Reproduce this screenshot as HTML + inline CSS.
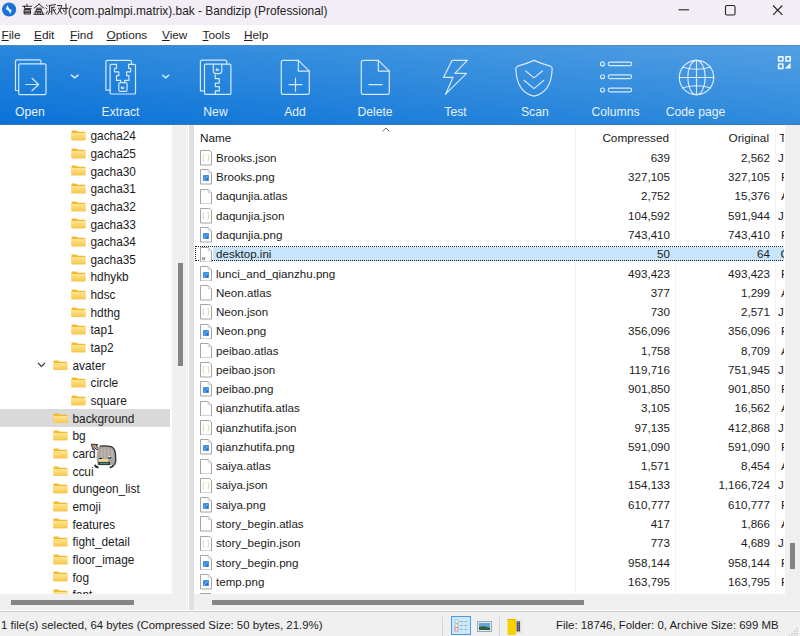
<!DOCTYPE html><html><head><meta charset="utf-8"><style>
*{margin:0;padding:0;box-sizing:border-box}
html,body{width:800px;height:636px;overflow:hidden;background:#fff}
body{position:relative;font-family:"Liberation Sans", sans-serif;color:#1b1b1b}
.abs{position:absolute}
svg{display:block}
#title{left:0;top:0;width:800px;height:25px;background:#f3eef5}
#title .t{position:absolute;left:22px;top:3.7px;font-size:11.88px;white-space:nowrap;color:#222}
#menu{left:0;top:25px;width:800px;height:20px;background:#fff}
#menu span{position:absolute;top:2.6px;font-size:11.8px;white-space:nowrap;color:#1e1e1e}
#menu u{text-decoration:underline;text-underline-offset:0.5px;text-decoration-thickness:1px}
#tb{left:0;top:45px;width:800px;height:80px;background:linear-gradient(90deg,#0a72d8,#2e8add)}
#tbt{left:0;top:0;width:800px;height:80px;background:linear-gradient(90deg,#2a88dc,#549fe2);-webkit-mask-image:linear-gradient(180deg,#000 0%,rgba(0,0,0,0) 100%);mask-image:linear-gradient(180deg,#000 0%,rgba(0,0,0,0) 100%)}
.lbl{position:absolute;top:59.8px;font-size:12.2px;color:#e6f1fc;white-space:nowrap;transform:translateX(-50%)}
#tree{left:0;top:125px;width:172px;height:469px;background:#fff;overflow:hidden}
.tr{position:absolute;left:0;width:172px;height:17.65px}
.tr .tx{position:absolute;top:2.7px;font-size:11.85px;white-space:nowrap}
.fold{position:absolute;top:3.6px;width:14.9px;height:10.8px}
#list{left:194px;top:125px;width:590px;height:469px;background:#fff;overflow:hidden}
.lr{position:absolute;left:0;width:591px;height:19.23px}
.lr .nm{position:absolute;left:22px;top:1.7px;font-size:11.6px;white-space:nowrap}
.lr .c1{position:absolute;right:115px;top:1.7px;font-size:11.6px;white-space:nowrap}
.lr .c2{position:absolute;right:15px;top:1.7px;font-size:11.6px;white-space:nowrap}
.lr .c3{position:absolute;left:587px;top:1.7px;font-size:11.6px;white-space:nowrap}
#status{left:0;top:611px;width:800px;height:25px;background:#f0f0f0;border-top:1px solid #cdcdcd}
#status span{position:absolute;top:7.3px;font-size:11.42px;white-space:nowrap}
</style></head><body>
<div id="title" class="abs">
<svg class="abs" style="left:0;top:0" width="20" height="20" viewBox="0 0 20 20"><circle cx="9.1" cy="9.5" r="7.1" fill="#1b72d6"/><path d="M7.2 5 L9.3 8.7 L11.7 9.9 L10.5 14.1 L8.3 10.5 L5.9 9.2 Z" fill="#e6f5ff"/></svg>
<svg class="abs" style="left:0;top:0" width="70" height="25" viewBox="0 0 70 25" fill="none" stroke="#262626" stroke-width="1" stroke-linecap="square"><path d="M27 4.3V5.6 M22.8 6.3H31.6 M24.6 6.3V8.6H31 M24.6 9.6H30.4V14 H24.6Z M24.6 11.1H30.4 M24.6 12.6H30.4"/><path d="M39 4.2L34.2 8 M39 4.2L43.8 8 M36.8 8.2H41.2 M36.6 9.4H41.4V11.2H36.6Z M35.2 12H42.8V14 M35.2 12V14 M37.8 12V14 M40.2 12V14 M34 14.3H44"/><path d="M46.4 5L47.2 5.8 M46 8L46.8 8.8 M46.2 13.8L47.4 11.2 M49.2 5.6L55.4 4.6 M49.6 6V10Q49.4 12.6 48.2 14.3 M51.6 7.6L54.6 7 M51.8 7.8V14.2 M51.8 10.6L50.4 12 M53 9L56 14.2 M55.4 9.4L54 10.8"/><path d="M57.6 5.6H61.8Q60.6 10 57.6 14 M58.6 8.2L62 13.8 M61.6 8.4H67.6 M66 4.3V13.6Q66 14.4 65 14.2 M63.4 10L64.2 11.6"/></svg>
<div class="t" style="left:68px">(com.palmpi.matrix).bak - Bandizip (Professional)</div>
<svg class="abs" style="left:660px;top:0" width="140" height="25" viewBox="0 0 140 25"><line x1="18.5" y1="9.8" x2="29" y2="9.8" stroke="#222" stroke-width="1.1"/><rect x="65.5" y="5.5" width="9.5" height="9.5" rx="1.5" fill="none" stroke="#222" stroke-width="1.1"/><path d="M113 5.5 L122.3 14.8 M122.3 5.5 L113 14.8" stroke="#222" stroke-width="1.1"/></svg>
</div>
<div id="menu" class="abs">
<span style="left:1.5px"><u>F</u>ile</span>
<span style="left:34px"><u>E</u>dit</span>
<span style="left:70px"><u>F</u>ind</span>
<span style="left:106.5px"><u>O</u>ptions</span>
<span style="left:162px"><u>V</u>iew</span>
<span style="left:202.5px"><u>T</u>ools</span>
<span style="left:244px"><u>H</u>elp</span>
</div>
<div id="tb" class="abs">
<div id="tbt" class="abs"></div>
<div class="abs" style="left:0;top:0;width:800px;height:1px;background:#4d8bc8"></div>
<div class="abs" style="left:0;top:79px;width:800px;height:1px;background:#3a78b8"></div>
<svg class="abs" style="left:0;top:0" width="800" height="80" viewBox="0 45 800 80" fill="none" stroke="rgba(232,243,255,0.9)" stroke-width="1.2" stroke-linejoin="round" stroke-linecap="round">
<!-- open -->
<path d="M18.7 90.5 L15.5 90.5 L15.5 61.5 Q15.5 59.8 17.2 59.8 L39.5 59.8 Q41 59.8 41 61.5 L41 63.9"/>
<rect x="18.7" y="63.9" width="27.3" height="30.8" rx="1.2"/>
<path d="M25.6 84.5 L38.6 84.5 M32 78.3 L38.6 84.5 L32 90.8"/>
<path d="M71.4 75.1 L74.8 77.9 L78.1 75.2" stroke-width="1.5" stroke="#d2ecff"/>
<!-- extract -->
<path d="M110.1 90.2 L105.9 90.2 L105.9 62 Q105.9 60.4 107.5 60.4 L130 60.4 Q131.5 60.4 131.5 62 L131.5 64.3"/>
<path d="M116.5 64.3 H111.1 Q110.1 64.3 110.1 65.3 V93 Q110.1 94 111.1 94 H134.5 Q135.5 94 135.5 93 V65.3 Q135.5 64.3 134.5 64.3 H128.6"/>
<path d="M116.5 64.3 V68.3 H114.5 V71.8 H118.8 V75.6 H116.5 V80.4 H120.8 V82.6"/>
<path d="M128.6 64.3 V68.3 H130.6 V71.8 H126.6 V75.6 H128.9 V80.4 H124.6 V82.6"/>
<rect x="118.8" y="82.6" width="8.3" height="8.8" rx="1.6"/>
<rect x="121" y="87.2" width="3.2" height="1.4" rx="0.7" stroke-width="1"/>
<path d="M162.7 75.3 L165.7 77.9 L168.7 75.3" stroke-width="1.5" stroke="#d2ecff"/>
<!-- new -->
<path d="M204.5 90.9 L200.4 90.9 L200.4 61.8 Q200.4 60.1 202.1 60.1 L225.1 60.1 Q226.8 60.1 226.8 61.8 L226.8 64.2"/>
<rect x="204.5" y="64.2" width="26.4" height="30.2" rx="1"/>
<path d="M213.3 64.2 V70.8 Q213.3 73.6 216.1 73.6 H219 Q221.8 73.6 221.8 70.8 V64.2"/>
<rect x="215.8" y="69.1" width="3" height="1.5" rx="0.75" stroke-width="1"/>
<path d="M215.3 74.9 V78.7 H219.3 V83.2 H215.3 V86.6 H219.3 V90.9 H215.3 V94.4"/>
<!-- add -->
<path d="M281.3 62 Q281.3 60.4 283 60.4 L298.3 60.4 L309.3 71.1 L309.3 92.7 Q309.3 94.4 307.6 94.4 L283 94.4 Q281.3 94.4 281.3 92.7 Z"/>
<path d="M298.3 60.4 V71.1 H309.3"/>
<path d="M288.9 84.6 H302.1 M295.5 78 V91.2"/>
<!-- delete -->
<path d="M361.3 62 Q361.3 60.4 363 60.4 L378.3 60.4 L389.3 71.1 L389.3 92.7 Q389.3 94.4 387.6 94.4 L363 94.4 Q361.3 94.4 361.3 92.7 Z"/>
<path d="M378.3 60.4 V71.1 H389.3"/>
<path d="M368.9 84.6 H382.1"/>
<!-- test -->
<path d="M452 60.4 L467.4 60.4 L454.9 73.3 L466.5 73.3 L445.4 94.4 L453 77.4 L443.5 77.4 Z"/>
<!-- scan -->
<path d="M534 60.4 Q527 63.6 517.6 66.2 Q515.7 66.8 515.8 68.8 Q516.4 82 521.4 88.4 Q526.4 94.6 534 96.2 Q541.6 94.6 546.6 88.4 Q551.6 82 552.2 68.8 Q552.3 66.8 550.4 66.2 Q541 63.6 534 60.4 Z"/>
<path d="M525.8 71 L534 77.9 L542.4 71 M524 80.3 L534 88.6 L543.8 80.3"/>
<!-- columns -->
<circle cx="602.5" cy="63.9" r="2"/><circle cx="602.5" cy="76.75" r="2"/><circle cx="602.5" cy="90" r="2"/>
<rect x="608.2" y="62.1" width="23.5" height="3.6" rx="1.8"/>
<rect x="608.2" y="74.95" width="23.5" height="3.6" rx="1.8"/>
<rect x="608.2" y="88.2" width="23.5" height="3.6" rx="1.8"/>
<!-- code page -->
<circle cx="696.5" cy="77.5" r="17.2"/>
<ellipse cx="696.5" cy="77.5" rx="8.7" ry="17.2"/>
<path d="M696.5 60.3 V94.7 M679.3 77.5 H713.7"/>
<path d="M682.3 67 Q696.5 71.5 710.7 67 M682.3 88 Q696.5 83.5 710.7 88"/>
<!-- small grid icon -->
<g stroke-width="1.5" stroke="#f4faff">
<rect x="778.6" y="56.8" width="4.3" height="4.3"/>
<rect x="785.9" y="56.8" width="4.3" height="4.3"/>
<rect x="778.6" y="64.1" width="4.3" height="4.3"/>
</g>
<path d="M784.8 68.6 L790.6 62.8 L790.6 68.6 Z" fill="#f4faff" stroke="none"/>
</svg>
<div class="lbl" style="left:30px">Open</div>
<div class="lbl" style="left:120.5px">Extract</div>
<div class="lbl" style="left:215.5px">New</div>
<div class="lbl" style="left:295px">Add</div>
<div class="lbl" style="left:375px">Delete</div>
<div class="lbl" style="left:455.5px">Test</div>
<div class="lbl" style="left:534.8px">Scan</div>
<div class="lbl" style="left:615.5px">Columns</div>
<div class="lbl" style="left:695.5px">Code page</div>
</div>
<div id="tree" class="abs">
<div class="tr" style="top:1.60px;">
<svg class="fold" style="left:71px" viewBox="0 0 14 12" preserveAspectRatio="none"><defs><linearGradient id="fg" x1="0" y1="0" x2="0" y2="1"><stop offset="0" stop-color="#ffe592"/><stop offset="1" stop-color="#f8c648"/></linearGradient></defs><path d="M0.5 1.2 Q0.5 0.5 1.2 0.5 L5 0.5 L6.4 2 L12.8 2 Q13.5 2 13.5 2.7 L13.5 11 Q13.5 11.5 13 11.5 L1 11.5 Q0.5 11.5 0.5 11 Z" fill="#f3b92e"/><path d="M0.5 3.4 L13.5 3.4 L13.5 11 Q13.5 11.5 13 11.5 L1 11.5 Q0.5 11.5 0.5 11 Z" fill="url(#fg)"/></svg>
<div class="tx" style="left:90.5px">gacha24</div>
</div>
<div class="tr" style="top:19.25px;">
<svg class="fold" style="left:71px" viewBox="0 0 14 12" preserveAspectRatio="none"><defs><linearGradient id="fg" x1="0" y1="0" x2="0" y2="1"><stop offset="0" stop-color="#ffe592"/><stop offset="1" stop-color="#f8c648"/></linearGradient></defs><path d="M0.5 1.2 Q0.5 0.5 1.2 0.5 L5 0.5 L6.4 2 L12.8 2 Q13.5 2 13.5 2.7 L13.5 11 Q13.5 11.5 13 11.5 L1 11.5 Q0.5 11.5 0.5 11 Z" fill="#f3b92e"/><path d="M0.5 3.4 L13.5 3.4 L13.5 11 Q13.5 11.5 13 11.5 L1 11.5 Q0.5 11.5 0.5 11 Z" fill="url(#fg)"/></svg>
<div class="tx" style="left:90.5px">gacha25</div>
</div>
<div class="tr" style="top:36.90px;">
<svg class="fold" style="left:71px" viewBox="0 0 14 12" preserveAspectRatio="none"><defs><linearGradient id="fg" x1="0" y1="0" x2="0" y2="1"><stop offset="0" stop-color="#ffe592"/><stop offset="1" stop-color="#f8c648"/></linearGradient></defs><path d="M0.5 1.2 Q0.5 0.5 1.2 0.5 L5 0.5 L6.4 2 L12.8 2 Q13.5 2 13.5 2.7 L13.5 11 Q13.5 11.5 13 11.5 L1 11.5 Q0.5 11.5 0.5 11 Z" fill="#f3b92e"/><path d="M0.5 3.4 L13.5 3.4 L13.5 11 Q13.5 11.5 13 11.5 L1 11.5 Q0.5 11.5 0.5 11 Z" fill="url(#fg)"/></svg>
<div class="tx" style="left:90.5px">gacha30</div>
</div>
<div class="tr" style="top:54.55px;">
<svg class="fold" style="left:71px" viewBox="0 0 14 12" preserveAspectRatio="none"><defs><linearGradient id="fg" x1="0" y1="0" x2="0" y2="1"><stop offset="0" stop-color="#ffe592"/><stop offset="1" stop-color="#f8c648"/></linearGradient></defs><path d="M0.5 1.2 Q0.5 0.5 1.2 0.5 L5 0.5 L6.4 2 L12.8 2 Q13.5 2 13.5 2.7 L13.5 11 Q13.5 11.5 13 11.5 L1 11.5 Q0.5 11.5 0.5 11 Z" fill="#f3b92e"/><path d="M0.5 3.4 L13.5 3.4 L13.5 11 Q13.5 11.5 13 11.5 L1 11.5 Q0.5 11.5 0.5 11 Z" fill="url(#fg)"/></svg>
<div class="tx" style="left:90.5px">gacha31</div>
</div>
<div class="tr" style="top:72.20px;">
<svg class="fold" style="left:71px" viewBox="0 0 14 12" preserveAspectRatio="none"><defs><linearGradient id="fg" x1="0" y1="0" x2="0" y2="1"><stop offset="0" stop-color="#ffe592"/><stop offset="1" stop-color="#f8c648"/></linearGradient></defs><path d="M0.5 1.2 Q0.5 0.5 1.2 0.5 L5 0.5 L6.4 2 L12.8 2 Q13.5 2 13.5 2.7 L13.5 11 Q13.5 11.5 13 11.5 L1 11.5 Q0.5 11.5 0.5 11 Z" fill="#f3b92e"/><path d="M0.5 3.4 L13.5 3.4 L13.5 11 Q13.5 11.5 13 11.5 L1 11.5 Q0.5 11.5 0.5 11 Z" fill="url(#fg)"/></svg>
<div class="tx" style="left:90.5px">gacha32</div>
</div>
<div class="tr" style="top:89.85px;">
<svg class="fold" style="left:71px" viewBox="0 0 14 12" preserveAspectRatio="none"><defs><linearGradient id="fg" x1="0" y1="0" x2="0" y2="1"><stop offset="0" stop-color="#ffe592"/><stop offset="1" stop-color="#f8c648"/></linearGradient></defs><path d="M0.5 1.2 Q0.5 0.5 1.2 0.5 L5 0.5 L6.4 2 L12.8 2 Q13.5 2 13.5 2.7 L13.5 11 Q13.5 11.5 13 11.5 L1 11.5 Q0.5 11.5 0.5 11 Z" fill="#f3b92e"/><path d="M0.5 3.4 L13.5 3.4 L13.5 11 Q13.5 11.5 13 11.5 L1 11.5 Q0.5 11.5 0.5 11 Z" fill="url(#fg)"/></svg>
<div class="tx" style="left:90.5px">gacha33</div>
</div>
<div class="tr" style="top:107.50px;">
<svg class="fold" style="left:71px" viewBox="0 0 14 12" preserveAspectRatio="none"><defs><linearGradient id="fg" x1="0" y1="0" x2="0" y2="1"><stop offset="0" stop-color="#ffe592"/><stop offset="1" stop-color="#f8c648"/></linearGradient></defs><path d="M0.5 1.2 Q0.5 0.5 1.2 0.5 L5 0.5 L6.4 2 L12.8 2 Q13.5 2 13.5 2.7 L13.5 11 Q13.5 11.5 13 11.5 L1 11.5 Q0.5 11.5 0.5 11 Z" fill="#f3b92e"/><path d="M0.5 3.4 L13.5 3.4 L13.5 11 Q13.5 11.5 13 11.5 L1 11.5 Q0.5 11.5 0.5 11 Z" fill="url(#fg)"/></svg>
<div class="tx" style="left:90.5px">gacha34</div>
</div>
<div class="tr" style="top:125.15px;">
<svg class="fold" style="left:71px" viewBox="0 0 14 12" preserveAspectRatio="none"><defs><linearGradient id="fg" x1="0" y1="0" x2="0" y2="1"><stop offset="0" stop-color="#ffe592"/><stop offset="1" stop-color="#f8c648"/></linearGradient></defs><path d="M0.5 1.2 Q0.5 0.5 1.2 0.5 L5 0.5 L6.4 2 L12.8 2 Q13.5 2 13.5 2.7 L13.5 11 Q13.5 11.5 13 11.5 L1 11.5 Q0.5 11.5 0.5 11 Z" fill="#f3b92e"/><path d="M0.5 3.4 L13.5 3.4 L13.5 11 Q13.5 11.5 13 11.5 L1 11.5 Q0.5 11.5 0.5 11 Z" fill="url(#fg)"/></svg>
<div class="tx" style="left:90.5px">gacha35</div>
</div>
<div class="tr" style="top:142.80px;">
<svg class="fold" style="left:71px" viewBox="0 0 14 12" preserveAspectRatio="none"><defs><linearGradient id="fg" x1="0" y1="0" x2="0" y2="1"><stop offset="0" stop-color="#ffe592"/><stop offset="1" stop-color="#f8c648"/></linearGradient></defs><path d="M0.5 1.2 Q0.5 0.5 1.2 0.5 L5 0.5 L6.4 2 L12.8 2 Q13.5 2 13.5 2.7 L13.5 11 Q13.5 11.5 13 11.5 L1 11.5 Q0.5 11.5 0.5 11 Z" fill="#f3b92e"/><path d="M0.5 3.4 L13.5 3.4 L13.5 11 Q13.5 11.5 13 11.5 L1 11.5 Q0.5 11.5 0.5 11 Z" fill="url(#fg)"/></svg>
<div class="tx" style="left:90.5px">hdhykb</div>
</div>
<div class="tr" style="top:160.45px;">
<svg class="fold" style="left:71px" viewBox="0 0 14 12" preserveAspectRatio="none"><defs><linearGradient id="fg" x1="0" y1="0" x2="0" y2="1"><stop offset="0" stop-color="#ffe592"/><stop offset="1" stop-color="#f8c648"/></linearGradient></defs><path d="M0.5 1.2 Q0.5 0.5 1.2 0.5 L5 0.5 L6.4 2 L12.8 2 Q13.5 2 13.5 2.7 L13.5 11 Q13.5 11.5 13 11.5 L1 11.5 Q0.5 11.5 0.5 11 Z" fill="#f3b92e"/><path d="M0.5 3.4 L13.5 3.4 L13.5 11 Q13.5 11.5 13 11.5 L1 11.5 Q0.5 11.5 0.5 11 Z" fill="url(#fg)"/></svg>
<div class="tx" style="left:90.5px">hdsc</div>
</div>
<div class="tr" style="top:178.10px;">
<svg class="fold" style="left:71px" viewBox="0 0 14 12" preserveAspectRatio="none"><defs><linearGradient id="fg" x1="0" y1="0" x2="0" y2="1"><stop offset="0" stop-color="#ffe592"/><stop offset="1" stop-color="#f8c648"/></linearGradient></defs><path d="M0.5 1.2 Q0.5 0.5 1.2 0.5 L5 0.5 L6.4 2 L12.8 2 Q13.5 2 13.5 2.7 L13.5 11 Q13.5 11.5 13 11.5 L1 11.5 Q0.5 11.5 0.5 11 Z" fill="#f3b92e"/><path d="M0.5 3.4 L13.5 3.4 L13.5 11 Q13.5 11.5 13 11.5 L1 11.5 Q0.5 11.5 0.5 11 Z" fill="url(#fg)"/></svg>
<div class="tx" style="left:90.5px">hdthg</div>
</div>
<div class="tr" style="top:195.75px;">
<svg class="fold" style="left:71px" viewBox="0 0 14 12" preserveAspectRatio="none"><defs><linearGradient id="fg" x1="0" y1="0" x2="0" y2="1"><stop offset="0" stop-color="#ffe592"/><stop offset="1" stop-color="#f8c648"/></linearGradient></defs><path d="M0.5 1.2 Q0.5 0.5 1.2 0.5 L5 0.5 L6.4 2 L12.8 2 Q13.5 2 13.5 2.7 L13.5 11 Q13.5 11.5 13 11.5 L1 11.5 Q0.5 11.5 0.5 11 Z" fill="#f3b92e"/><path d="M0.5 3.4 L13.5 3.4 L13.5 11 Q13.5 11.5 13 11.5 L1 11.5 Q0.5 11.5 0.5 11 Z" fill="url(#fg)"/></svg>
<div class="tx" style="left:90.5px">tap1</div>
</div>
<div class="tr" style="top:213.40px;">
<svg class="fold" style="left:71px" viewBox="0 0 14 12" preserveAspectRatio="none"><defs><linearGradient id="fg" x1="0" y1="0" x2="0" y2="1"><stop offset="0" stop-color="#ffe592"/><stop offset="1" stop-color="#f8c648"/></linearGradient></defs><path d="M0.5 1.2 Q0.5 0.5 1.2 0.5 L5 0.5 L6.4 2 L12.8 2 Q13.5 2 13.5 2.7 L13.5 11 Q13.5 11.5 13 11.5 L1 11.5 Q0.5 11.5 0.5 11 Z" fill="#f3b92e"/><path d="M0.5 3.4 L13.5 3.4 L13.5 11 Q13.5 11.5 13 11.5 L1 11.5 Q0.5 11.5 0.5 11 Z" fill="url(#fg)"/></svg>
<div class="tx" style="left:90.5px">tap2</div>
</div>
<div class="tr" style="top:231.05px;">
<svg class="fold" style="left:53px" viewBox="0 0 14 12" preserveAspectRatio="none"><defs><linearGradient id="fg" x1="0" y1="0" x2="0" y2="1"><stop offset="0" stop-color="#ffe592"/><stop offset="1" stop-color="#f8c648"/></linearGradient></defs><path d="M0.5 1.2 Q0.5 0.5 1.2 0.5 L5 0.5 L6.4 2 L12.8 2 Q13.5 2 13.5 2.7 L13.5 11 Q13.5 11.5 13 11.5 L1 11.5 Q0.5 11.5 0.5 11 Z" fill="#f3b92e"/><path d="M0.5 3.4 L13.5 3.4 L13.5 11 Q13.5 11.5 13 11.5 L1 11.5 Q0.5 11.5 0.5 11 Z" fill="url(#fg)"/></svg>
<svg class="abs" style="left:37px;top:6px" width="10" height="6" viewBox="0 0 10 6"><path d="M1 1 L4.5 4.5 L8 1" fill="none" stroke="#333" stroke-width="1.1"/></svg>
<div class="tx" style="left:72.5px">avater</div>
</div>
<div class="tr" style="top:248.70px;">
<svg class="fold" style="left:71px" viewBox="0 0 14 12" preserveAspectRatio="none"><defs><linearGradient id="fg" x1="0" y1="0" x2="0" y2="1"><stop offset="0" stop-color="#ffe592"/><stop offset="1" stop-color="#f8c648"/></linearGradient></defs><path d="M0.5 1.2 Q0.5 0.5 1.2 0.5 L5 0.5 L6.4 2 L12.8 2 Q13.5 2 13.5 2.7 L13.5 11 Q13.5 11.5 13 11.5 L1 11.5 Q0.5 11.5 0.5 11 Z" fill="#f3b92e"/><path d="M0.5 3.4 L13.5 3.4 L13.5 11 Q13.5 11.5 13 11.5 L1 11.5 Q0.5 11.5 0.5 11 Z" fill="url(#fg)"/></svg>
<div class="tx" style="left:90.5px">circle</div>
</div>
<div class="tr" style="top:266.35px;">
<svg class="fold" style="left:71px" viewBox="0 0 14 12" preserveAspectRatio="none"><defs><linearGradient id="fg" x1="0" y1="0" x2="0" y2="1"><stop offset="0" stop-color="#ffe592"/><stop offset="1" stop-color="#f8c648"/></linearGradient></defs><path d="M0.5 1.2 Q0.5 0.5 1.2 0.5 L5 0.5 L6.4 2 L12.8 2 Q13.5 2 13.5 2.7 L13.5 11 Q13.5 11.5 13 11.5 L1 11.5 Q0.5 11.5 0.5 11 Z" fill="#f3b92e"/><path d="M0.5 3.4 L13.5 3.4 L13.5 11 Q13.5 11.5 13 11.5 L1 11.5 Q0.5 11.5 0.5 11 Z" fill="url(#fg)"/></svg>
<div class="tx" style="left:90.5px">square</div>
</div>
<div class="tr" style="top:284.00px;background:linear-gradient(90deg,#d9d9d9 170.5px,#fff 170.5px);">
<svg class="fold" style="left:53px" viewBox="0 0 14 12" preserveAspectRatio="none"><defs><linearGradient id="fg" x1="0" y1="0" x2="0" y2="1"><stop offset="0" stop-color="#ffe592"/><stop offset="1" stop-color="#f8c648"/></linearGradient></defs><path d="M0.5 1.2 Q0.5 0.5 1.2 0.5 L5 0.5 L6.4 2 L12.8 2 Q13.5 2 13.5 2.7 L13.5 11 Q13.5 11.5 13 11.5 L1 11.5 Q0.5 11.5 0.5 11 Z" fill="#f3b92e"/><path d="M0.5 3.4 L13.5 3.4 L13.5 11 Q13.5 11.5 13 11.5 L1 11.5 Q0.5 11.5 0.5 11 Z" fill="url(#fg)"/></svg>
<div class="tx" style="left:72.5px">background</div>
</div>
<div class="tr" style="top:301.65px;">
<svg class="fold" style="left:53px" viewBox="0 0 14 12" preserveAspectRatio="none"><defs><linearGradient id="fg" x1="0" y1="0" x2="0" y2="1"><stop offset="0" stop-color="#ffe592"/><stop offset="1" stop-color="#f8c648"/></linearGradient></defs><path d="M0.5 1.2 Q0.5 0.5 1.2 0.5 L5 0.5 L6.4 2 L12.8 2 Q13.5 2 13.5 2.7 L13.5 11 Q13.5 11.5 13 11.5 L1 11.5 Q0.5 11.5 0.5 11 Z" fill="#f3b92e"/><path d="M0.5 3.4 L13.5 3.4 L13.5 11 Q13.5 11.5 13 11.5 L1 11.5 Q0.5 11.5 0.5 11 Z" fill="url(#fg)"/></svg>
<div class="tx" style="left:72.5px">bg</div>
</div>
<div class="tr" style="top:319.30px;">
<svg class="fold" style="left:53px" viewBox="0 0 14 12" preserveAspectRatio="none"><defs><linearGradient id="fg" x1="0" y1="0" x2="0" y2="1"><stop offset="0" stop-color="#ffe592"/><stop offset="1" stop-color="#f8c648"/></linearGradient></defs><path d="M0.5 1.2 Q0.5 0.5 1.2 0.5 L5 0.5 L6.4 2 L12.8 2 Q13.5 2 13.5 2.7 L13.5 11 Q13.5 11.5 13 11.5 L1 11.5 Q0.5 11.5 0.5 11 Z" fill="#f3b92e"/><path d="M0.5 3.4 L13.5 3.4 L13.5 11 Q13.5 11.5 13 11.5 L1 11.5 Q0.5 11.5 0.5 11 Z" fill="url(#fg)"/></svg>
<div class="tx" style="left:72.5px">card</div>
</div>
<div class="tr" style="top:336.95px;">
<svg class="fold" style="left:53px" viewBox="0 0 14 12" preserveAspectRatio="none"><defs><linearGradient id="fg" x1="0" y1="0" x2="0" y2="1"><stop offset="0" stop-color="#ffe592"/><stop offset="1" stop-color="#f8c648"/></linearGradient></defs><path d="M0.5 1.2 Q0.5 0.5 1.2 0.5 L5 0.5 L6.4 2 L12.8 2 Q13.5 2 13.5 2.7 L13.5 11 Q13.5 11.5 13 11.5 L1 11.5 Q0.5 11.5 0.5 11 Z" fill="#f3b92e"/><path d="M0.5 3.4 L13.5 3.4 L13.5 11 Q13.5 11.5 13 11.5 L1 11.5 Q0.5 11.5 0.5 11 Z" fill="url(#fg)"/></svg>
<div class="tx" style="left:72.5px">ccui</div>
</div>
<div class="tr" style="top:354.60px;">
<svg class="fold" style="left:53px" viewBox="0 0 14 12" preserveAspectRatio="none"><defs><linearGradient id="fg" x1="0" y1="0" x2="0" y2="1"><stop offset="0" stop-color="#ffe592"/><stop offset="1" stop-color="#f8c648"/></linearGradient></defs><path d="M0.5 1.2 Q0.5 0.5 1.2 0.5 L5 0.5 L6.4 2 L12.8 2 Q13.5 2 13.5 2.7 L13.5 11 Q13.5 11.5 13 11.5 L1 11.5 Q0.5 11.5 0.5 11 Z" fill="#f3b92e"/><path d="M0.5 3.4 L13.5 3.4 L13.5 11 Q13.5 11.5 13 11.5 L1 11.5 Q0.5 11.5 0.5 11 Z" fill="url(#fg)"/></svg>
<div class="tx" style="left:72.5px">dungeon_list</div>
</div>
<div class="tr" style="top:372.25px;">
<svg class="fold" style="left:53px" viewBox="0 0 14 12" preserveAspectRatio="none"><defs><linearGradient id="fg" x1="0" y1="0" x2="0" y2="1"><stop offset="0" stop-color="#ffe592"/><stop offset="1" stop-color="#f8c648"/></linearGradient></defs><path d="M0.5 1.2 Q0.5 0.5 1.2 0.5 L5 0.5 L6.4 2 L12.8 2 Q13.5 2 13.5 2.7 L13.5 11 Q13.5 11.5 13 11.5 L1 11.5 Q0.5 11.5 0.5 11 Z" fill="#f3b92e"/><path d="M0.5 3.4 L13.5 3.4 L13.5 11 Q13.5 11.5 13 11.5 L1 11.5 Q0.5 11.5 0.5 11 Z" fill="url(#fg)"/></svg>
<div class="tx" style="left:72.5px">emoji</div>
</div>
<div class="tr" style="top:389.90px;">
<svg class="fold" style="left:53px" viewBox="0 0 14 12" preserveAspectRatio="none"><defs><linearGradient id="fg" x1="0" y1="0" x2="0" y2="1"><stop offset="0" stop-color="#ffe592"/><stop offset="1" stop-color="#f8c648"/></linearGradient></defs><path d="M0.5 1.2 Q0.5 0.5 1.2 0.5 L5 0.5 L6.4 2 L12.8 2 Q13.5 2 13.5 2.7 L13.5 11 Q13.5 11.5 13 11.5 L1 11.5 Q0.5 11.5 0.5 11 Z" fill="#f3b92e"/><path d="M0.5 3.4 L13.5 3.4 L13.5 11 Q13.5 11.5 13 11.5 L1 11.5 Q0.5 11.5 0.5 11 Z" fill="url(#fg)"/></svg>
<div class="tx" style="left:72.5px">features</div>
</div>
<div class="tr" style="top:407.55px;">
<svg class="fold" style="left:53px" viewBox="0 0 14 12" preserveAspectRatio="none"><defs><linearGradient id="fg" x1="0" y1="0" x2="0" y2="1"><stop offset="0" stop-color="#ffe592"/><stop offset="1" stop-color="#f8c648"/></linearGradient></defs><path d="M0.5 1.2 Q0.5 0.5 1.2 0.5 L5 0.5 L6.4 2 L12.8 2 Q13.5 2 13.5 2.7 L13.5 11 Q13.5 11.5 13 11.5 L1 11.5 Q0.5 11.5 0.5 11 Z" fill="#f3b92e"/><path d="M0.5 3.4 L13.5 3.4 L13.5 11 Q13.5 11.5 13 11.5 L1 11.5 Q0.5 11.5 0.5 11 Z" fill="url(#fg)"/></svg>
<div class="tx" style="left:72.5px">fight_detail</div>
</div>
<div class="tr" style="top:425.20px;">
<svg class="fold" style="left:53px" viewBox="0 0 14 12" preserveAspectRatio="none"><defs><linearGradient id="fg" x1="0" y1="0" x2="0" y2="1"><stop offset="0" stop-color="#ffe592"/><stop offset="1" stop-color="#f8c648"/></linearGradient></defs><path d="M0.5 1.2 Q0.5 0.5 1.2 0.5 L5 0.5 L6.4 2 L12.8 2 Q13.5 2 13.5 2.7 L13.5 11 Q13.5 11.5 13 11.5 L1 11.5 Q0.5 11.5 0.5 11 Z" fill="#f3b92e"/><path d="M0.5 3.4 L13.5 3.4 L13.5 11 Q13.5 11.5 13 11.5 L1 11.5 Q0.5 11.5 0.5 11 Z" fill="url(#fg)"/></svg>
<div class="tx" style="left:72.5px">floor_image</div>
</div>
<div class="tr" style="top:442.85px;">
<svg class="fold" style="left:53px" viewBox="0 0 14 12" preserveAspectRatio="none"><defs><linearGradient id="fg" x1="0" y1="0" x2="0" y2="1"><stop offset="0" stop-color="#ffe592"/><stop offset="1" stop-color="#f8c648"/></linearGradient></defs><path d="M0.5 1.2 Q0.5 0.5 1.2 0.5 L5 0.5 L6.4 2 L12.8 2 Q13.5 2 13.5 2.7 L13.5 11 Q13.5 11.5 13 11.5 L1 11.5 Q0.5 11.5 0.5 11 Z" fill="#f3b92e"/><path d="M0.5 3.4 L13.5 3.4 L13.5 11 Q13.5 11.5 13 11.5 L1 11.5 Q0.5 11.5 0.5 11 Z" fill="url(#fg)"/></svg>
<div class="tx" style="left:72.5px">fog</div>
</div>
<div class="tr" style="top:460.50px;">
<svg class="fold" style="left:53px" viewBox="0 0 14 12" preserveAspectRatio="none"><defs><linearGradient id="fg" x1="0" y1="0" x2="0" y2="1"><stop offset="0" stop-color="#ffe592"/><stop offset="1" stop-color="#f8c648"/></linearGradient></defs><path d="M0.5 1.2 Q0.5 0.5 1.2 0.5 L5 0.5 L6.4 2 L12.8 2 Q13.5 2 13.5 2.7 L13.5 11 Q13.5 11.5 13 11.5 L1 11.5 Q0.5 11.5 0.5 11 Z" fill="#f3b92e"/><path d="M0.5 3.4 L13.5 3.4 L13.5 11 Q13.5 11.5 13 11.5 L1 11.5 Q0.5 11.5 0.5 11 Z" fill="url(#fg)"/></svg>
<div class="tx" style="left:72.5px">font</div>
</div>
</div>
<div class="abs" style="left:172px;top:125px;width:17px;height:486px;background:linear-gradient(90deg,#f0f0f0 16px,#fff 16px)"></div>
<div class="abs" style="left:178px;top:263px;width:5px;height:103px;background:#858585"></div>
<div class="abs" style="left:0;top:594px;width:172px;height:17px;background:#f0f0f0"></div>
<div class="abs" style="left:11px;top:600px;width:123px;height:5px;background:#858585"></div>
<div class="abs" style="left:189px;top:125px;width:5px;height:486px;background:#dfdfdf"></div>
<div id="list" class="abs">
<div class="abs" style="left:6px;font-size:11.75px;top:6.3px">Name</div>
<svg class="abs" style="left:187.7px;top:2.4px" width="8" height="5" viewBox="0 0 8 5"><path d="M0.6 4.4 L4 1 L7.4 4.4" fill="none" stroke="#6e6e6e" stroke-width="1"/></svg>
<div class="abs" style="right:115px;font-size:11.75px;top:6.3px">Compressed</div>
<div class="abs" style="right:15px;font-size:11.75px;top:6.3px">Original</div>
<div class="abs" style="left:585.2px;font-size:11.75px;top:6.3px">T</div>
<div class="abs" style="left:381px;top:3px;width:1px;height:470px;background:#f3f3f3"></div>
<div class="abs" style="left:481px;top:3px;width:1px;height:470px;background:#f3f3f3"></div>
<div class="abs" style="left:581px;top:3px;width:1px;height:470px;background:#f3f3f3"></div>
<div class="lr" style="top:24.20px">
<svg class="abs" style="left:6px;top:1px" width="12" height="15.5" viewBox="0 0 12 16" preserveAspectRatio="none"><path d="M0.5 0.5 H9.5 L11.5 2.5 V15.5 H0.5 Z" fill="#fff" stroke="#a3a3a3" stroke-width="1"/><path d="M4.6 4.5 Q3.4 4.5 3.4 5.6 V7.4 L2.7 8 L3.4 8.6 V10.4 Q3.4 11.5 4.6 11.5 M7.4 4.5 Q8.6 4.5 8.6 5.6 V7.4 L9.3 8 L8.6 8.6 V10.4 Q8.6 11.5 7.4 11.5" fill="none" stroke="#cdd89c" stroke-width="0.9"/></svg>
<div class="nm">Brooks.json</div><div class="c1">639</div><div class="c2">2,562</div><div class="c3" style="left:584px">J</div>
</div>
<div class="lr" style="top:43.47px">
<svg class="abs" style="left:6px;top:1px" width="12" height="15.5" viewBox="0 0 12 16" preserveAspectRatio="none"><path d="M0.5 0.5 H8.2 L11.5 3.8 V15.5 H0.5 Z" fill="#fff" stroke="#a3a3a3" stroke-width="1"/><path d="M8.2 0.5 V3.8 H11.5" fill="#eee" stroke="#c8c8c8" stroke-width="0.8"/><defs><linearGradient id="pg" x1="0" y1="0" x2="1" y2="1"><stop offset="0" stop-color="#4aa8f0"/><stop offset="1" stop-color="#1560c8"/></linearGradient></defs><rect x="3" y="6.2" width="5.8" height="6" fill="url(#pg)"/><path d="M4 11.5 L8 7.5" stroke="#a8dcff" stroke-width="0.7"/></svg>
<div class="nm">Brooks.png</div><div class="c1">327,105</div><div class="c2">327,105</div><div class="c3" style="left:587px">P</div>
</div>
<div class="lr" style="top:62.74px">
<svg class="abs" style="left:6px;top:1px" width="12" height="15.5" viewBox="0 0 12 16" preserveAspectRatio="none"><path d="M0.5 0.5 H8.2 L11.5 3.8 V15.5 H0.5 Z" fill="#fff" stroke="#a3a3a3" stroke-width="1"/><path d="M8.2 0.5 V3.8 H11.5" fill="#eee" stroke="#c8c8c8" stroke-width="0.8"/></svg>
<div class="nm">daqunjia.atlas</div><div class="c1">2,752</div><div class="c2">15,376</div><div class="c3" style="left:587px">A</div>
</div>
<div class="lr" style="top:82.01px">
<svg class="abs" style="left:6px;top:1px" width="12" height="15.5" viewBox="0 0 12 16" preserveAspectRatio="none"><path d="M0.5 0.5 H9.5 L11.5 2.5 V15.5 H0.5 Z" fill="#fff" stroke="#a3a3a3" stroke-width="1"/><path d="M4.6 4.5 Q3.4 4.5 3.4 5.6 V7.4 L2.7 8 L3.4 8.6 V10.4 Q3.4 11.5 4.6 11.5 M7.4 4.5 Q8.6 4.5 8.6 5.6 V7.4 L9.3 8 L8.6 8.6 V10.4 Q8.6 11.5 7.4 11.5" fill="none" stroke="#cdd89c" stroke-width="0.9"/></svg>
<div class="nm">daqunjia.json</div><div class="c1">104,592</div><div class="c2">591,944</div><div class="c3" style="left:584px">J</div>
</div>
<div class="lr" style="top:101.28px">
<svg class="abs" style="left:6px;top:1px" width="12" height="15.5" viewBox="0 0 12 16" preserveAspectRatio="none"><path d="M0.5 0.5 H8.2 L11.5 3.8 V15.5 H0.5 Z" fill="#fff" stroke="#a3a3a3" stroke-width="1"/><path d="M8.2 0.5 V3.8 H11.5" fill="#eee" stroke="#c8c8c8" stroke-width="0.8"/><defs><linearGradient id="pg" x1="0" y1="0" x2="1" y2="1"><stop offset="0" stop-color="#4aa8f0"/><stop offset="1" stop-color="#1560c8"/></linearGradient></defs><rect x="3" y="6.2" width="5.8" height="6" fill="url(#pg)"/><path d="M4 11.5 L8 7.5" stroke="#a8dcff" stroke-width="0.7"/></svg>
<div class="nm">daqunjia.png</div><div class="c1">743,410</div><div class="c2">743,410</div><div class="c3" style="left:587px">P</div>
</div>
<div class="lr" style="top:120.55px">
<div class="abs" style="left:18.5px;top:1.2px;width:572.5px;height:14px;background:#c8e5fb"></div>
<div class="abs" style="left:1px;top:0.35px;width:590px;height:15.6px;border:1px dotted #1a1a1a"></div>
<svg class="abs" style="left:6px;top:1px" width="12" height="15.5" viewBox="0 0 12 16" preserveAspectRatio="none"><path d="M0.5 0.5 H8.2 L11.5 3.8 V15.5 H0.5 Z" fill="#fff" stroke="#a3a3a3" stroke-width="1"/><path d="M8.2 0.5 V3.8 H11.5" fill="#eee" stroke="#c8c8c8" stroke-width="0.8"/><circle cx="3.6" cy="12.2" r="1.8" fill="#8a8a8a"/><circle cx="3.6" cy="12.2" r="0.7" fill="#fff"/></svg>
<div class="nm">desktop.ini</div><div class="c1">50</div><div class="c2">64</div><div class="c3" style="left:586.5px">C</div>
</div>
<div class="lr" style="top:139.82px">
<svg class="abs" style="left:6px;top:1px" width="12" height="15.5" viewBox="0 0 12 16" preserveAspectRatio="none"><path d="M0.5 0.5 H8.2 L11.5 3.8 V15.5 H0.5 Z" fill="#fff" stroke="#a3a3a3" stroke-width="1"/><path d="M8.2 0.5 V3.8 H11.5" fill="#eee" stroke="#c8c8c8" stroke-width="0.8"/><defs><linearGradient id="pg" x1="0" y1="0" x2="1" y2="1"><stop offset="0" stop-color="#4aa8f0"/><stop offset="1" stop-color="#1560c8"/></linearGradient></defs><rect x="3" y="6.2" width="5.8" height="6" fill="url(#pg)"/><path d="M4 11.5 L8 7.5" stroke="#a8dcff" stroke-width="0.7"/></svg>
<div class="nm">lunci_and_qianzhu.png</div><div class="c1">493,423</div><div class="c2">493,423</div><div class="c3" style="left:587px">P</div>
</div>
<div class="lr" style="top:159.09px">
<svg class="abs" style="left:6px;top:1px" width="12" height="15.5" viewBox="0 0 12 16" preserveAspectRatio="none"><path d="M0.5 0.5 H8.2 L11.5 3.8 V15.5 H0.5 Z" fill="#fff" stroke="#a3a3a3" stroke-width="1"/><path d="M8.2 0.5 V3.8 H11.5" fill="#eee" stroke="#c8c8c8" stroke-width="0.8"/></svg>
<div class="nm">Neon.atlas</div><div class="c1">377</div><div class="c2">1,299</div><div class="c3" style="left:587px">A</div>
</div>
<div class="lr" style="top:178.36px">
<svg class="abs" style="left:6px;top:1px" width="12" height="15.5" viewBox="0 0 12 16" preserveAspectRatio="none"><path d="M0.5 0.5 H9.5 L11.5 2.5 V15.5 H0.5 Z" fill="#fff" stroke="#a3a3a3" stroke-width="1"/><path d="M4.6 4.5 Q3.4 4.5 3.4 5.6 V7.4 L2.7 8 L3.4 8.6 V10.4 Q3.4 11.5 4.6 11.5 M7.4 4.5 Q8.6 4.5 8.6 5.6 V7.4 L9.3 8 L8.6 8.6 V10.4 Q8.6 11.5 7.4 11.5" fill="none" stroke="#cdd89c" stroke-width="0.9"/></svg>
<div class="nm">Neon.json</div><div class="c1">730</div><div class="c2">2,571</div><div class="c3" style="left:584px">J</div>
</div>
<div class="lr" style="top:197.63px">
<svg class="abs" style="left:6px;top:1px" width="12" height="15.5" viewBox="0 0 12 16" preserveAspectRatio="none"><path d="M0.5 0.5 H8.2 L11.5 3.8 V15.5 H0.5 Z" fill="#fff" stroke="#a3a3a3" stroke-width="1"/><path d="M8.2 0.5 V3.8 H11.5" fill="#eee" stroke="#c8c8c8" stroke-width="0.8"/><defs><linearGradient id="pg" x1="0" y1="0" x2="1" y2="1"><stop offset="0" stop-color="#4aa8f0"/><stop offset="1" stop-color="#1560c8"/></linearGradient></defs><rect x="3" y="6.2" width="5.8" height="6" fill="url(#pg)"/><path d="M4 11.5 L8 7.5" stroke="#a8dcff" stroke-width="0.7"/></svg>
<div class="nm">Neon.png</div><div class="c1">356,096</div><div class="c2">356,096</div><div class="c3" style="left:587px">P</div>
</div>
<div class="lr" style="top:216.90px">
<svg class="abs" style="left:6px;top:1px" width="12" height="15.5" viewBox="0 0 12 16" preserveAspectRatio="none"><path d="M0.5 0.5 H8.2 L11.5 3.8 V15.5 H0.5 Z" fill="#fff" stroke="#a3a3a3" stroke-width="1"/><path d="M8.2 0.5 V3.8 H11.5" fill="#eee" stroke="#c8c8c8" stroke-width="0.8"/></svg>
<div class="nm">peibao.atlas</div><div class="c1">1,758</div><div class="c2">8,709</div><div class="c3" style="left:587px">A</div>
</div>
<div class="lr" style="top:236.17px">
<svg class="abs" style="left:6px;top:1px" width="12" height="15.5" viewBox="0 0 12 16" preserveAspectRatio="none"><path d="M0.5 0.5 H9.5 L11.5 2.5 V15.5 H0.5 Z" fill="#fff" stroke="#a3a3a3" stroke-width="1"/><path d="M4.6 4.5 Q3.4 4.5 3.4 5.6 V7.4 L2.7 8 L3.4 8.6 V10.4 Q3.4 11.5 4.6 11.5 M7.4 4.5 Q8.6 4.5 8.6 5.6 V7.4 L9.3 8 L8.6 8.6 V10.4 Q8.6 11.5 7.4 11.5" fill="none" stroke="#cdd89c" stroke-width="0.9"/></svg>
<div class="nm">peibao.json</div><div class="c1">119,716</div><div class="c2">751,945</div><div class="c3" style="left:584px">J</div>
</div>
<div class="lr" style="top:255.44px">
<svg class="abs" style="left:6px;top:1px" width="12" height="15.5" viewBox="0 0 12 16" preserveAspectRatio="none"><path d="M0.5 0.5 H8.2 L11.5 3.8 V15.5 H0.5 Z" fill="#fff" stroke="#a3a3a3" stroke-width="1"/><path d="M8.2 0.5 V3.8 H11.5" fill="#eee" stroke="#c8c8c8" stroke-width="0.8"/><defs><linearGradient id="pg" x1="0" y1="0" x2="1" y2="1"><stop offset="0" stop-color="#4aa8f0"/><stop offset="1" stop-color="#1560c8"/></linearGradient></defs><rect x="3" y="6.2" width="5.8" height="6" fill="url(#pg)"/><path d="M4 11.5 L8 7.5" stroke="#a8dcff" stroke-width="0.7"/></svg>
<div class="nm">peibao.png</div><div class="c1">901,850</div><div class="c2">901,850</div><div class="c3" style="left:587px">P</div>
</div>
<div class="lr" style="top:274.71px">
<svg class="abs" style="left:6px;top:1px" width="12" height="15.5" viewBox="0 0 12 16" preserveAspectRatio="none"><path d="M0.5 0.5 H8.2 L11.5 3.8 V15.5 H0.5 Z" fill="#fff" stroke="#a3a3a3" stroke-width="1"/><path d="M8.2 0.5 V3.8 H11.5" fill="#eee" stroke="#c8c8c8" stroke-width="0.8"/></svg>
<div class="nm">qianzhutifa.atlas</div><div class="c1">3,105</div><div class="c2">16,562</div><div class="c3" style="left:587px">A</div>
</div>
<div class="lr" style="top:293.98px">
<svg class="abs" style="left:6px;top:1px" width="12" height="15.5" viewBox="0 0 12 16" preserveAspectRatio="none"><path d="M0.5 0.5 H9.5 L11.5 2.5 V15.5 H0.5 Z" fill="#fff" stroke="#a3a3a3" stroke-width="1"/><path d="M4.6 4.5 Q3.4 4.5 3.4 5.6 V7.4 L2.7 8 L3.4 8.6 V10.4 Q3.4 11.5 4.6 11.5 M7.4 4.5 Q8.6 4.5 8.6 5.6 V7.4 L9.3 8 L8.6 8.6 V10.4 Q8.6 11.5 7.4 11.5" fill="none" stroke="#cdd89c" stroke-width="0.9"/></svg>
<div class="nm">qianzhutifa.json</div><div class="c1">97,135</div><div class="c2">412,868</div><div class="c3" style="left:584px">J</div>
</div>
<div class="lr" style="top:313.25px">
<svg class="abs" style="left:6px;top:1px" width="12" height="15.5" viewBox="0 0 12 16" preserveAspectRatio="none"><path d="M0.5 0.5 H8.2 L11.5 3.8 V15.5 H0.5 Z" fill="#fff" stroke="#a3a3a3" stroke-width="1"/><path d="M8.2 0.5 V3.8 H11.5" fill="#eee" stroke="#c8c8c8" stroke-width="0.8"/><defs><linearGradient id="pg" x1="0" y1="0" x2="1" y2="1"><stop offset="0" stop-color="#4aa8f0"/><stop offset="1" stop-color="#1560c8"/></linearGradient></defs><rect x="3" y="6.2" width="5.8" height="6" fill="url(#pg)"/><path d="M4 11.5 L8 7.5" stroke="#a8dcff" stroke-width="0.7"/></svg>
<div class="nm">qianzhutifa.png</div><div class="c1">591,090</div><div class="c2">591,090</div><div class="c3" style="left:587px">P</div>
</div>
<div class="lr" style="top:332.52px">
<svg class="abs" style="left:6px;top:1px" width="12" height="15.5" viewBox="0 0 12 16" preserveAspectRatio="none"><path d="M0.5 0.5 H8.2 L11.5 3.8 V15.5 H0.5 Z" fill="#fff" stroke="#a3a3a3" stroke-width="1"/><path d="M8.2 0.5 V3.8 H11.5" fill="#eee" stroke="#c8c8c8" stroke-width="0.8"/></svg>
<div class="nm">saiya.atlas</div><div class="c1">1,571</div><div class="c2">8,454</div><div class="c3" style="left:587px">A</div>
</div>
<div class="lr" style="top:351.79px">
<svg class="abs" style="left:6px;top:1px" width="12" height="15.5" viewBox="0 0 12 16" preserveAspectRatio="none"><path d="M0.5 0.5 H9.5 L11.5 2.5 V15.5 H0.5 Z" fill="#fff" stroke="#a3a3a3" stroke-width="1"/><path d="M4.6 4.5 Q3.4 4.5 3.4 5.6 V7.4 L2.7 8 L3.4 8.6 V10.4 Q3.4 11.5 4.6 11.5 M7.4 4.5 Q8.6 4.5 8.6 5.6 V7.4 L9.3 8 L8.6 8.6 V10.4 Q8.6 11.5 7.4 11.5" fill="none" stroke="#cdd89c" stroke-width="0.9"/></svg>
<div class="nm">saiya.json</div><div class="c1">154,133</div><div class="c2">1,166,724</div><div class="c3" style="left:584px">J</div>
</div>
<div class="lr" style="top:371.06px">
<svg class="abs" style="left:6px;top:1px" width="12" height="15.5" viewBox="0 0 12 16" preserveAspectRatio="none"><path d="M0.5 0.5 H8.2 L11.5 3.8 V15.5 H0.5 Z" fill="#fff" stroke="#a3a3a3" stroke-width="1"/><path d="M8.2 0.5 V3.8 H11.5" fill="#eee" stroke="#c8c8c8" stroke-width="0.8"/><defs><linearGradient id="pg" x1="0" y1="0" x2="1" y2="1"><stop offset="0" stop-color="#4aa8f0"/><stop offset="1" stop-color="#1560c8"/></linearGradient></defs><rect x="3" y="6.2" width="5.8" height="6" fill="url(#pg)"/><path d="M4 11.5 L8 7.5" stroke="#a8dcff" stroke-width="0.7"/></svg>
<div class="nm">saiya.png</div><div class="c1">610,777</div><div class="c2">610,777</div><div class="c3" style="left:587px">P</div>
</div>
<div class="lr" style="top:390.33px">
<svg class="abs" style="left:6px;top:1px" width="12" height="15.5" viewBox="0 0 12 16" preserveAspectRatio="none"><path d="M0.5 0.5 H8.2 L11.5 3.8 V15.5 H0.5 Z" fill="#fff" stroke="#a3a3a3" stroke-width="1"/><path d="M8.2 0.5 V3.8 H11.5" fill="#eee" stroke="#c8c8c8" stroke-width="0.8"/></svg>
<div class="nm">story_begin.atlas</div><div class="c1">417</div><div class="c2">1,866</div><div class="c3" style="left:587px">A</div>
</div>
<div class="lr" style="top:409.60px">
<svg class="abs" style="left:6px;top:1px" width="12" height="15.5" viewBox="0 0 12 16" preserveAspectRatio="none"><path d="M0.5 0.5 H9.5 L11.5 2.5 V15.5 H0.5 Z" fill="#fff" stroke="#a3a3a3" stroke-width="1"/><path d="M4.6 4.5 Q3.4 4.5 3.4 5.6 V7.4 L2.7 8 L3.4 8.6 V10.4 Q3.4 11.5 4.6 11.5 M7.4 4.5 Q8.6 4.5 8.6 5.6 V7.4 L9.3 8 L8.6 8.6 V10.4 Q8.6 11.5 7.4 11.5" fill="none" stroke="#cdd89c" stroke-width="0.9"/></svg>
<div class="nm">story_begin.json</div><div class="c1">773</div><div class="c2">4,689</div><div class="c3" style="left:584px">J</div>
</div>
<div class="lr" style="top:428.87px">
<svg class="abs" style="left:6px;top:1px" width="12" height="15.5" viewBox="0 0 12 16" preserveAspectRatio="none"><path d="M0.5 0.5 H8.2 L11.5 3.8 V15.5 H0.5 Z" fill="#fff" stroke="#a3a3a3" stroke-width="1"/><path d="M8.2 0.5 V3.8 H11.5" fill="#eee" stroke="#c8c8c8" stroke-width="0.8"/><defs><linearGradient id="pg" x1="0" y1="0" x2="1" y2="1"><stop offset="0" stop-color="#4aa8f0"/><stop offset="1" stop-color="#1560c8"/></linearGradient></defs><rect x="3" y="6.2" width="5.8" height="6" fill="url(#pg)"/><path d="M4 11.5 L8 7.5" stroke="#a8dcff" stroke-width="0.7"/></svg>
<div class="nm">story_begin.png</div><div class="c1">958,144</div><div class="c2">958,144</div><div class="c3" style="left:587px">P</div>
</div>
<div class="lr" style="top:448.14px">
<svg class="abs" style="left:6px;top:1px" width="12" height="15.5" viewBox="0 0 12 16" preserveAspectRatio="none"><path d="M0.5 0.5 H8.2 L11.5 3.8 V15.5 H0.5 Z" fill="#fff" stroke="#a3a3a3" stroke-width="1"/><path d="M8.2 0.5 V3.8 H11.5" fill="#eee" stroke="#c8c8c8" stroke-width="0.8"/><defs><linearGradient id="pg" x1="0" y1="0" x2="1" y2="1"><stop offset="0" stop-color="#4aa8f0"/><stop offset="1" stop-color="#1560c8"/></linearGradient></defs><rect x="3" y="6.2" width="5.8" height="6" fill="url(#pg)"/><path d="M4 11.5 L8 7.5" stroke="#a8dcff" stroke-width="0.7"/></svg>
<div class="nm">temp.png</div><div class="c1">163,795</div><div class="c2">163,795</div><div class="c3" style="left:587px">P</div>
</div>
<div class="abs" style="left:6px;top:467.5px;width:11px;height:1px;background:#a3a3a3"></div>
</div>
<div class="abs" style="left:785px;top:125px;width:15px;height:486px;background:#f0f0f0"></div>
<div class="abs" style="left:790px;top:543px;width:5px;height:26px;background:#858585"></div>
<div class="abs" style="left:194px;top:594px;width:591px;height:17px;background:#f0f0f0"></div>
<div class="abs" style="left:212px;top:600px;width:372px;height:5px;background:#858585"></div>
<div class="abs" style="left:0;top:610px;width:800px;height:1px;background:#fafafa"></div>
<div id="status" class="abs">
<span style="left:1px">1 file(s) selected, 64 bytes (Compressed Size: 50 bytes, 21.9%)</span>
<div class="abs" style="left:442px;top:5px;width:1px;height:20px;background:#d5d5d5"></div>
<div class="abs" style="left:451px;top:4px;width:20px;height:19px;background:#cce8ff;border:1px solid #4c9be0"></div>
<svg class="abs" style="left:454px;top:7px" width="14" height="13" viewBox="0 0 14 13"><rect x="1" y="1" width="3" height="3" fill="#fff" stroke="#9aa" stroke-width="0.7"/><rect x="1" y="5" width="3" height="3" fill="#fff" stroke="#9aa" stroke-width="0.7"/><rect x="1" y="9" width="3" height="3" fill="#fff" stroke="#d66" stroke-width="0.7"/><path d="M6 2.5H9M10.5 2.5H13M6 6.5H9M10.5 6.5H13M6 10.5H9M10.5 10.5H13" stroke="#8aa" stroke-width="0.9"/></svg>
<svg class="abs" style="left:477px;top:9px" width="15" height="11" viewBox="0 0 15 11"><rect x="0.5" y="0.5" width="14" height="10" fill="#dfe8f0" stroke="#9ab" stroke-width="1"/><rect x="2" y="2" width="11" height="7" fill="#6aa3d8"/><path d="M2 9 L2 6 Q7 4 13 7 L13 9 Z" fill="#2f5e3c"/></svg>
<div class="abs" style="left:499px;top:5px;width:1px;height:20px;background:#d5d5d5"></div>
<svg class="abs" style="left:507px;top:6px" width="17" height="18" viewBox="0 0 17 18"><rect x="0.5" y="1" width="8.6" height="16" fill="#f7d200"/><rect x="0.5" y="1" width="8.6" height="1" fill="#e6b400"/><rect x="9" y="2.2" width="6.6" height="12.8" fill="#dcdcd6"/><rect x="9.6" y="3.4" width="3.4" height="10" fill="#4c4c5c"/><path d="M11.3 4.2V12.8" stroke="#c8c8d0" stroke-width="0.9" stroke-dasharray="1 1.2"/><rect x="14.2" y="2.6" width="1.2" height="12" fill="#f4f4f0"/></svg>
<span style="left:556px">File: 18746, Folder: 0, Archive Size: 699 MB</span>
<svg class="abs" style="left:788px;top:14px" width="12" height="11" viewBox="0 0 12 11" fill="#b4b4b4"><rect x="8.5" y="2" width="1.2" height="1.2"/><rect x="8.5" y="4.5" width="1.2" height="1.2"/><rect x="6" y="4.5" width="1.2" height="1.2"/><rect x="8.5" y="7" width="1.2" height="1.2"/><rect x="6" y="7" width="1.2" height="1.2"/><rect x="3.5" y="7" width="1.2" height="1.2"/><rect x="8.5" y="9.5" width="1.2" height="1.2"/><rect x="6" y="9.5" width="1.2" height="1.2"/><rect x="3.5" y="9.5" width="1.2" height="1.2"/><rect x="1" y="9.5" width="1.2" height="1.2"/></svg>
</div>
<svg class="abs" style="left:90px;top:443px" width="28" height="26" viewBox="0 0 28 26"><path d="M1.2 1.2 L7.6 1.6 L6.4 3 L8.6 5.4 L7 7 L4.6 4.6 L3 6.6 Z" fill="#b89888" stroke="#3a2a26" stroke-width="1"/><path d="M5 5.2 L5.8 4.2 M6 6.4 L7 5.4" stroke="#fff" stroke-width="0.6"/><path d="M9.6 3.2 Q16 2.6 21 3.6 Q24.6 5 25.4 10 L25.8 18 L24.6 22 L8 22 Q6.6 19 6.6 14 Q6.8 7 9.6 3.2 Z" fill="#aaa69f"/><path d="M9.6 3.2 Q16 2.6 21 3.6 Q24.6 5 25.4 10 L25.8 18 L24.6 22" fill="none" stroke="#2e2e2e" stroke-width="1.3"/><path d="M12 6 L11.6 15 M15 5.6 L15 15.5 M18 5.8 L18.6 15 M21.6 6.6 L22.4 14" stroke="#c9c6c0" stroke-width="0.9"/><path d="M9.2 15.6 L12 15.4 M18.4 15 L21.4 14.8" stroke="#2a2a2a" stroke-width="1.3"/><path d="M18.6 13.4 L20.4 13.8" stroke="#f4f4f4" stroke-width="1"/><rect x="8.6" y="16.2" width="9.4" height="2.6" fill="#efdc98"/><rect x="8.2" y="18.9" width="11.8" height="3.2" fill="#2a4038"/><path d="M10 20.3 H18.6" stroke="#6fa08c" stroke-width="0.9"/><path d="M5 21.8 Q5.6 24.6 8.6 24.2 M19.8 24.2 Q22.6 24.6 23.6 22" stroke="#2c2c2c" stroke-width="1.9" fill="none"/></svg>
</body></html>
